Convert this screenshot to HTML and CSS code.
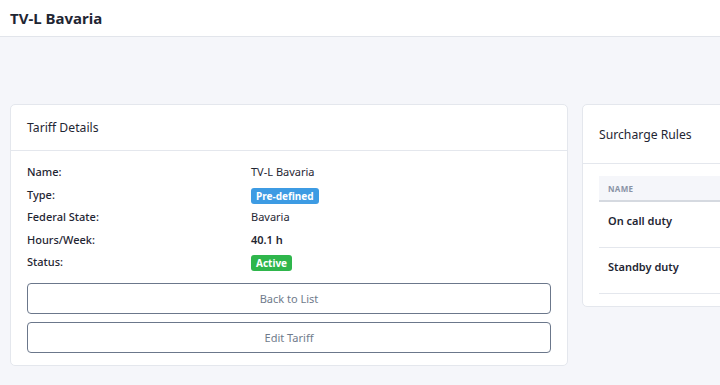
FILE: index.html
```html
<!DOCTYPE html>
<html lang="en">
<head>
  <meta charset="UTF-8">
  <title>TV-L Bavaria</title>
  <link rel="stylesheet" href="styles.css">
</head>
<body>

  <header class="topbar">
    <h1>TV-L Bavaria</h1>
  </header>

  <main class="content">
    <section class="card">
      <div class="card-header">Tariff Details</div>
      <div class="card-body">
        <dl class="details">
          <dt>Name:</dt>
          <dd>TV-L Bavaria</dd>
          <dt>Type:</dt>
          <dd><span class="badge badge-blue">Pre-defined</span></dd>
          <dt>Federal State:</dt>
          <dd>Bavaria</dd>
          <dt>Hours/Week:</dt>
          <dd class="strong">40.1 h</dd>
          <dt>Status:</dt>
          <dd><span class="badge badge-green">Active</span></dd>
        </dl>
        <div class="actions">
          <button class="btn-outline">Back to List</button>
          <button class="btn-outline">Edit Tariff</button>
        </div>
      </div>
    </section>

    <section class="card">
      <div class="card-header tall">Surcharge Rules</div>
      <div class="card-body table-body">
        <table class="rules">
          <thead>
            <tr><th>Name</th></tr>
          </thead>
          <tbody>
            <tr><td>On call duty</td></tr>
            <tr><td>Standby duty</td></tr>
          </tbody>
        </table>
      </div>
    </section>
  </main>

</body>
</html>
```

FILE: styles.css
```css
html, body {
  margin: 0;
  padding: 0;
}
body {
  font-family: "Noto Sans", "Liberation Sans", sans-serif;
  background-color: #f5f6fa;
  color: #1f2633;
  overflow: hidden;
}
.topbar {
  background: #fff;
  border-bottom: 1px solid #e2e5eb;
  height: 36px;
  padding: 0 10px;
  display: flex;
  align-items: center;
}
.topbar h1 {
  margin: 0;
  font-size: 15px;
  font-weight: 700;
  color: #1f2633;
}
.content {
  display: grid;
  grid-template-columns: 558px 558px;
  gap: 14px;
  align-items: start;
  padding: 67px 10px 0 10px;
}
.card {
  background: #fff;
  border: 1px solid #e4e7ed;
  border-radius: 5px;
}
.card-header {
  height: 45px;
  display: flex;
  align-items: center;
  padding: 0 16px;
  font-size: 12.2px;
  border-bottom: 1px solid #e4e7ed;
}
.card-header.tall {
  height: 58px;
}
.card-body {
  padding: 10px 16px 12px 16px;
}
.table-body {
  padding-top: 12px;
}
.details {
  display: grid;
  grid-template-columns: 224px 1fr;
  margin: 0;
  font-size: 11px;
  line-height: 22.5px;
}
.details dt {
  font-weight: 500;
}
.details dd {
  margin: 0;
}
.details .strong {
  font-weight: 600;
}
.badge {
  display: inline-block;
  color: #fff;
  font-weight: 700;
  font-size: 10px;
  line-height: 16px;
  padding: 0 5px;
  border-radius: 3px;
  vertical-align: middle;
}
.badge-blue {
  background: #3d9be3;
}
.badge-green {
  background: #2fb64c;
}
.actions {
  display: flex;
  flex-direction: column;
  gap: 8px;
  margin-top: 9px;
}
.btn-outline {
  height: 31px;
  background: #fff;
  border: 1px solid #6b778b;
  border-radius: 4px;
  font-family: inherit;
  font-size: 11px;
  color: #707b8c;
}
.rules {
  width: 100%;
  border-collapse: collapse;
  font-size: 11px;
}
.rules th {
  text-align: left;
  background: #f5f6fa;
  color: #8a93a6;
  font-size: 8px;
  font-weight: 700;
  text-transform: uppercase;
  letter-spacing: 0.3px;
  height: 24px;
  padding: 0 9px;
  border-bottom: 2px solid #d5d9e0;
}
.rules td {
  vertical-align: top;
  line-height: 16px;
  padding: 11px 9px 18px 9px;
  font-weight: 600;
  border-bottom: 1px solid #e4e7ed;
}
```
